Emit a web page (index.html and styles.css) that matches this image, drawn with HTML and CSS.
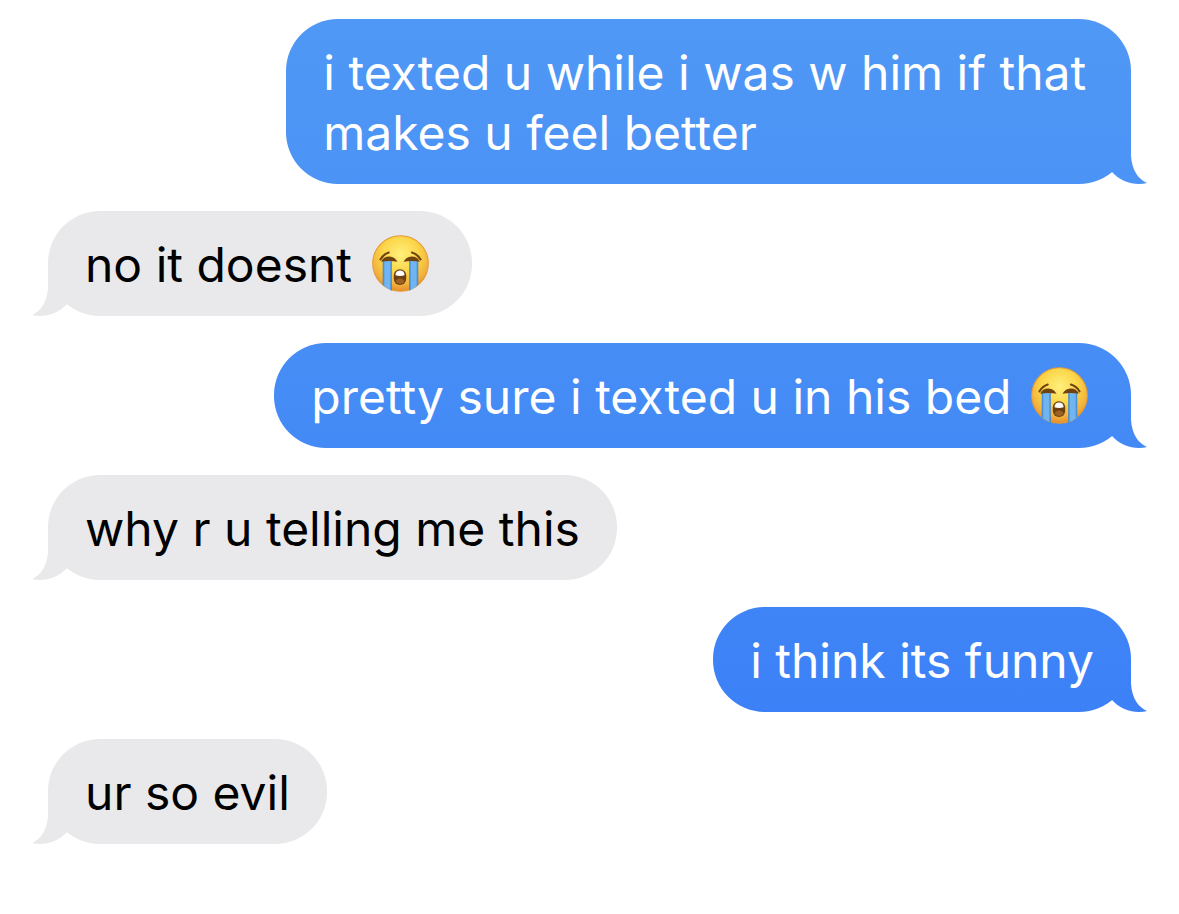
FILE: index.html
```html
<!DOCTYPE html>
<html lang="en">
<head>
    <meta charset="UTF-8">
    <meta name="viewport" content="width=device-width, initial-scale=1.0">
    <title>Messages</title>
    <link rel="stylesheet" href="styles.css">
</head>
<body>
    <!-- Crying face, used by several messages -->
    <svg class="defs" aria-hidden="true">
        <defs>
            <radialGradient id="skin" cx="50%" cy="34%" r="66%">
                <stop offset="0" stop-color="#fff07c"/>
                <stop offset="0.5" stop-color="#fbd548"/>
                <stop offset="0.82" stop-color="#f2b03c"/>
                <stop offset="1" stop-color="#e58b2b"/>
            </radialGradient>
            <linearGradient id="tear" x1="0" y1="0" x2="1" y2="0">
                <stop offset="0" stop-color="#357fc9"/>
                <stop offset="0.25" stop-color="#70b4f2"/>
                <stop offset="0.75" stop-color="#70b4f2"/>
                <stop offset="1" stop-color="#357fc9"/>
            </linearGradient>
        </defs>
        <symbol id="crying" viewBox="0 0 170 170">
            <circle cx="85" cy="85" r="83" fill="url(#skin)" stroke="#e39a35" stroke-width="3"/>
            <path d="M32 78 Q46 72 59 78 V166 Q45 160 32 149 Z" fill="url(#tear)"/>
            <path d="M111 78 Q124 72 138 78 V149 Q125 160 111 166 Z" fill="url(#tear)"/>
            <path d="M25 73 Q34 57 50 52" fill="none" stroke="#70420f" stroke-width="6" stroke-linecap="round"/>
            <path d="M119 52 Q136 57 145 73" fill="none" stroke="#70420f" stroke-width="6" stroke-linecap="round"/>
            <path d="M27 80 Q34 64 52 64 Q69 65 76 80 Q52 75 27 80 Z" fill="#70420f"/>
            <path d="M94 80 Q101 65 118 64 Q136 64 143 80 Q118 75 94 80 Z" fill="#70420f"/>
            <rect x="65" y="102" width="37" height="47" rx="18" fill="#6e3f12"/>
            <path d="M70 120 Q70 106 84 106 Q97 106 97 120 Q84 124 70 120 Z" fill="#fff"/>
            <path d="M70 137 Q84 123 97 137 Q94 146 84 146 Q74 146 70 137 Z" fill="#9b6224"/>
        </symbol>
    </svg>

    <main class="chat">
        <p class="bubble sent long">i texted u while i was w him if that makes u feel better</p>
        <p class="bubble received">no it doesnt <svg class="emoji" role="img" aria-label="😭"><use href="#crying"/></svg></p>
        <p class="bubble sent">pretty sure i texted u in his bed <svg class="emoji" role="img" aria-label="😭"><use href="#crying"/></svg></p>
        <p class="bubble received">why r u telling me this</p>
        <p class="bubble sent">i think its funny</p>
        <p class="bubble received">ur so evil</p>
    </main>
</body>
</html>
```
FILE: styles.css
```css
* {
    box-sizing: border-box;
}

body {
    margin: 0;
    background: #fff;
    font-family: Inter, "Liberation Sans", sans-serif;
    font-size: 48px;
    line-height: 60px;
}

.defs {
    position: absolute;
    width: 0;
    height: 0;
}

.chat {
    display: flex;
    flex-direction: column;
    align-items: flex-start;
    gap: 27px;
    padding: 19px 48px;
}

.bubble {
    position: relative;
    max-width: 80%;
    margin: 0;
    padding: 24px 37px 21px;
    border-radius: 52px;
}

.long {
    width: 78%;
}

/* One gradient runs down the whole window behind the sent bubbles */
.sent,
.sent::after {
    background: linear-gradient(#5099f5, #367af7) fixed;
}

.sent {
    align-self: flex-end;
    color: #fff;
}

.received,
.received::after {
    background: #e9e9eb;
}

.received {
    color: #000;
}

/* Tail */
.bubble::after {
    content: "";
    position: absolute;
    right: -16px;
    bottom: 0;
    width: 52px;
    height: 52px;
    clip-path: path("M36 0 V24 C37 38 43 47 52 51 C40 54 26 50 17 40 L8 20 Z");
}

.received::after {
    right: auto;
    left: -16px;
    transform: scaleX(-1);
}

.emoji {
    width: 57px;
    height: 57px;
    margin: 0 6px;
    vertical-align: -10px;
}
```
